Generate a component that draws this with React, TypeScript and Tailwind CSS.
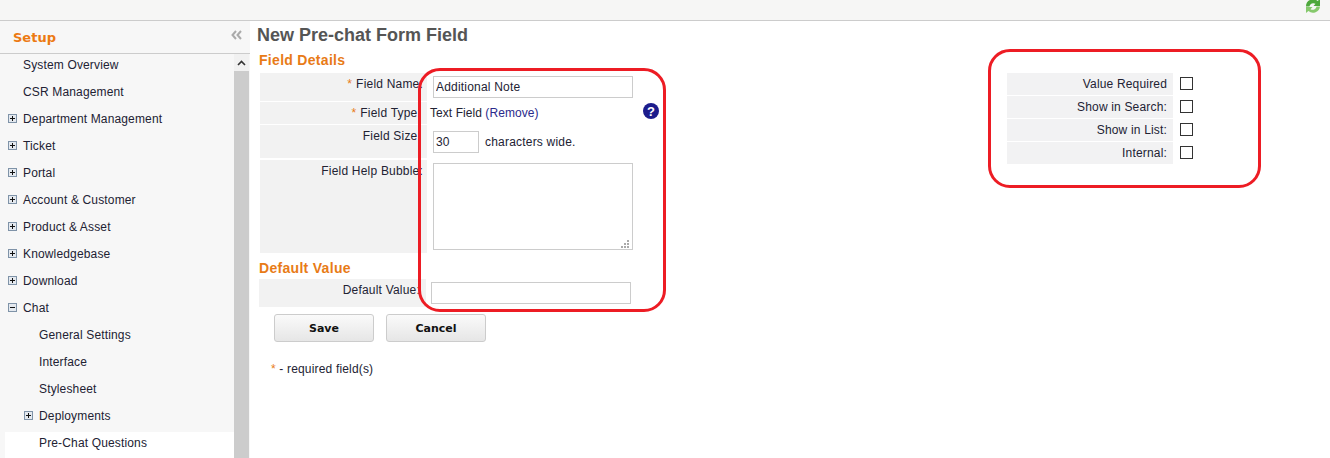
import React from "react";

const Box = ({ open }: { open?: boolean }) => (
  <svg width="9" height="9" viewBox="0 0 9 9" className="block shrink-0">
    <rect x="0.5" y="0.5" width="8" height="8" fill="#e4e9ef" stroke="#7f93a8" />
    <path d={open ? "M2 4.5H7" : "M2 4.5H7M4.5 2V7"} stroke="#111" strokeWidth="1" />
  </svg>
);

type Item = { t: string; exp?: "plus" | "minus"; sub?: boolean; sel?: boolean };
const items: Item[] = [
  { t: "System Overview" },
  { t: "CSR Management" },
  { t: "Department Management", exp: "plus" },
  { t: "Ticket", exp: "plus" },
  { t: "Portal", exp: "plus" },
  { t: "Account & Customer", exp: "plus" },
  { t: "Product & Asset", exp: "plus" },
  { t: "Knowledgebase", exp: "plus" },
  { t: "Download", exp: "plus" },
  { t: "Chat", exp: "minus" },
  { t: "General Settings", sub: true },
  { t: "Interface", sub: true },
  { t: "Stylesheet", sub: true },
  { t: "Deployments", sub: true, exp: "plus" },
  { t: "Pre-Chat Questions", sub: true, sel: true },
];

const SideItem = ({ it }: { it: Item }) => (
  <div className={`h-[27px] flex items-center pb-[6px] ml-[5px] ${it.sel ? "bg-white" : ""}`}>
    <div className={`flex items-center ${it.sub ? "pl-[19px]" : "pl-[3px]"}`}>
      <div className="w-[15px] flex">{it.exp && <Box open={it.exp === "minus"} />}</div>
      <span className="text-[12px] tracking-[0.15px] text-[#222233]">{it.t}</span>
    </div>
  </div>
);

const Row = ({ h, label, star, pt = "pt-[2px]", pr = "pr-[4px]", children }: { h: string; label: string; star?: boolean; pt?: string; pr?: string; children?: React.ReactNode }) => (
  <div className={`flex ${h}`}>
    <div className={`w-[167px] bg-[#f2f2f2] text-right text-[12px] tracking-[0.2px] text-[#222233] whitespace-nowrap ${pr} ${pt}`}>
      {star && <span className="text-[#e87b17] mr-[4px]">*</span>}
      {label}
    </div>
    {children}
  </div>
);

const Flag = ({ label }: { label: string }) => (
  <div className="flex items-start h-[22px]">
    <div className="w-[166px] h-full bg-[#f2f2f3] text-right pr-[6px] text-[12px] tracking-[0.17px] leading-[22px] text-[#222233]">{label}</div>
    <div className="w-[13px] h-[13px] ml-[7px] mt-[4px] border border-[#333] bg-white" />
  </div>
);

const btn = "w-[100px] h-[28px] pt-[2px] border border-[#ccc] rounded-[3px] bg-gradient-to-b from-[#fafafa] to-[#e6e6e6] text-[11px] font-bold text-[#111] font-['DejaVu_Sans',sans-serif]";

export default function App() {
  return (
    <div className="relative w-[1330px] h-[458px] overflow-hidden bg-white font-['Liberation_Sans',Arial,sans-serif] flex flex-col">
      <div className="h-[21px] shrink-0 bg-[#f6f6f5] border-b border-[#cccccc] flex justify-end overflow-hidden pr-[9px]">
        <svg width="16" height="16" viewBox="0 0 16 16" className="-mt-[2px]">
          <path d="M1 8.5A7 7 0 0 1 12.6 3L15 1V8H8.5l2-2.2A4 4 0 0 0 4.4 8.5Z" fill="#4ea83c" />
          <path d="M15 8.5A7 7 0 0 1 3.4 13L1 15V9h6.5l-2 2.2a4 4 0 0 0 6.1-2.7Z" fill="#86c96c" />
        </svg>
      </div>
      <div className="flex flex-1 min-h-0">
        <aside className="w-[250px] shrink-0 bg-[#f7f7f7] flex flex-col">
          <div className="h-[33px] shrink-0 border-b border-[#cccccc] flex items-center justify-between pl-[13px] pr-[8px]">
            <span className="text-[13px] font-bold text-[#ec7a13] font-['DejaVu_Sans',sans-serif] leading-none">Setup</span>
            <svg width="11" height="10" viewBox="0 0 11 10" className="-mt-[4px]">
              <path d="M5 1L1.5 5 5 9M10 1L6.5 5 10 9" fill="none" stroke="#aaa" strokeWidth="2" />
            </svg>
          </div>
          <div className="flex flex-1 min-h-0">
            <div className="w-[234px] overflow-hidden">
              {items.map((it) => (
                <SideItem key={it.t} it={it} />
              ))}
            </div>
            <div className="w-[15px] bg-[#cccccc] flex flex-col">
              <div className="h-[17px] bg-[#f1f1f1] flex items-center justify-center">
                <svg width="9" height="6" viewBox="0 0 9 6">
                  <path d="M1 5L4.5 1.5 8 5" fill="none" stroke="#333" strokeWidth="1.6" />
                </svg>
              </div>
            </div>
          </div>
        </aside>
        <main className="flex-1 flex">
          <div className="w-[757px] pl-[9px] shrink-0">
            <h1 className="text-[18px] leading-[28px] font-bold text-[#555] -ml-[2px]">New Pre-chat Form Field</h1>
            <h2 className="text-[14px] tracking-[0.3px] leading-[22px] font-bold text-[#e87b17]">Field Details</h2>
            <div className="flex flex-col gap-px pl-px mt-[2px]">
              <Row h="h-[28px]" label="Field Name:" star>
                <input defaultValue="Additional Note" className="ml-[6px] mt-[3px] w-[200px] h-[22px] border border-[#cccccc] px-[2px] text-[12px] tracking-[0.2px] text-[#222233] outline-none" />
              </Row>
              <Row h="h-[22px]" label="Field Type:" star pr="pr-[6px]">
                <div className="ml-[3px] pt-[2px] w-[229px] text-[12px] tracking-[0.06px] text-[#222233] whitespace-nowrap flex justify-between">
                  <span>
                    Text Field <span className="text-[#2a2a8c]">(Remove)</span>
                  </span>
                  <svg width="16" height="16" viewBox="0 0 16 16" className="-mt-[1px]">
                    <circle cx="8" cy="8" r="8" fill="#1c1c8c" />
                    <text x="8" y="12.5" textAnchor="middle" fontSize="13" fontWeight="700" fill="#fff" fontFamily="Liberation Sans">?</text>
                  </svg>
                </div>
              </Row>
              <Row h="h-[33px]" label="Field Size:" pr="pr-[6px]">
                <div className="ml-[6px] mt-[6px] flex items-start text-[12px] tracking-[0.2px] text-[#222233]">
                  <input defaultValue="30" className="w-[46px] h-[22px] border border-[#cccccc] px-[2px] outline-none" />
                  <span className="ml-[6px] leading-[22px]">characters wide.</span>
                </div>
              </Row>
              <Row h="h-[93px] mt-px" label="Field Help Bubble:">
                <div className="relative ml-[6px] mt-[3px] w-[200px] h-[87px]">
                  <textarea className="block w-full h-full border border-[#cccccc] outline-none resize-none" />
                  <svg width="9" height="8" viewBox="0 0 9 8" className="absolute right-[3px] bottom-[2px]" fill="#aaa">
                    <rect x="6" y="0" width="2" height="2" />
                    <rect x="3" y="3" width="2" height="2" />
                    <rect x="6" y="3" width="2" height="2" />
                    <rect x="0" y="6" width="2" height="2" />
                    <rect x="3" y="6" width="2" height="2" />
                    <rect x="6" y="6" width="2" height="2" />
                  </svg>
                </div>
              </Row>
            </div>
            <h2 className="text-[14px] tracking-[0.3px] leading-[22px] font-bold text-[#e87b17] mt-[4px]">Default Value</h2>
            <div>
              <Row h="h-[28px]" label="Default Value:" pt="pt-[2px]" pr="pr-[6px]">
                <input className="ml-[5px] mt-[3px] w-[200px] h-[22px] border border-[#cccccc] outline-none" />
              </Row>
            </div>
            <div className="flex gap-[12px] ml-[15px] mt-[7px]">
              <button className={btn}>Save</button>
              <button className={btn}>Cancel</button>
            </div>
            <p className="ml-[12px] mt-[18px] text-[12px] tracking-[0.17px] text-[#222233]">
              <span className="text-[#e87b17]">*</span> - required field(s)
            </p>
          </div>
          <div className="pt-[52px] flex flex-col gap-px">
            <Flag label="Value Required" />
            <Flag label="Show in Search:" />
            <Flag label="Show in List:" />
            <Flag label="Internal:" />
          </div>
        </main>
      </div>
      <div className="absolute left-[418px] top-[68px] w-[248px] h-[244px] border-[3px] border-[#ed1c24] rounded-[22px] pointer-events-none" />
      <div className="absolute left-[988px] top-[49px] w-[273px] h-[139px] border-[3px] border-[#ed1c24] rounded-[22px] pointer-events-none" />
    </div>
  );
}
